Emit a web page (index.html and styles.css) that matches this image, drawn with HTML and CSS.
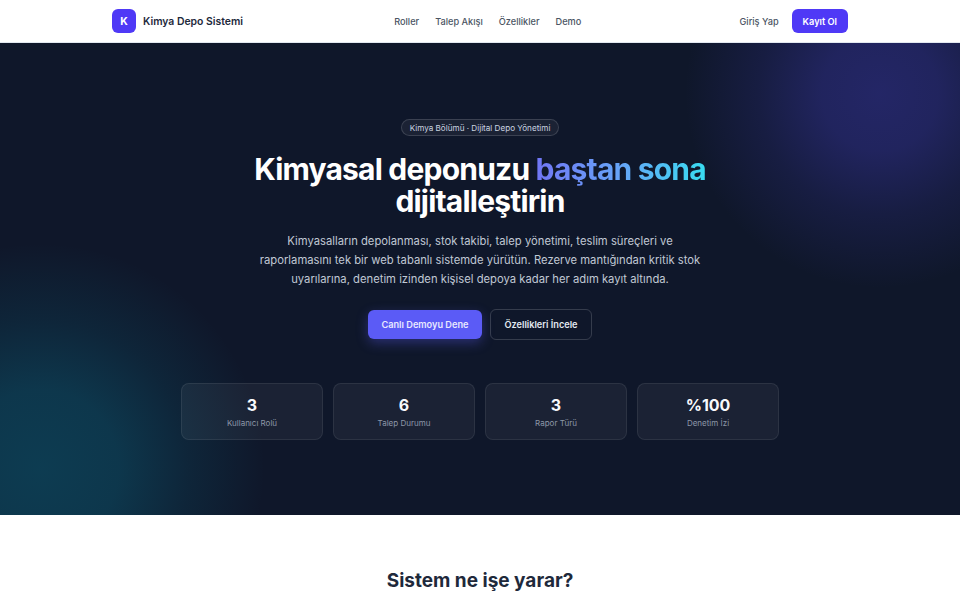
FILE: index.html
```html
<!DOCTYPE html>
<html lang="tr">
<head>
  <meta charset="UTF-8" />
  <meta name="viewport" content="width=device-width, initial-scale=1.0"/>
  <title>Kimya Depo Sistemi</title>
  <link rel="stylesheet" href="styles.css">
</head>
<body>
  <header class="navbar">
    <div class="navbar-inner">
      <a class="brand" href="#">
        <span class="brand-mark">K</span>
        <span class="brand-name">Kimya Depo Sistemi</span>
      </a>
      <nav class="nav-links">
        <a href="#">Roller</a>
        <a href="#">Talep Akışı</a>
        <a href="#">Özellikler</a>
        <a href="#">Demo</a>
      </nav>
      <div class="nav-actions">
        <a class="nav-login" href="#">Giriş Yap</a>
        <a class="nav-register" href="#">Kayıt Ol</a>
      </div>
    </div>
  </header>

  <section class="hero">
    <span class="hero-badge">Kimya Bölümü · Dijital Depo Yönetimi</span>
    <h1>Kimyasal deponuzu <span class="hero-accent">baştan sona</span> dijitalleştirin</h1>
    <p class="hero-text">Kimyasalların depolanması, stok takibi, talep yönetimi, teslim süreçleri ve raporlamasını tek bir web tabanlı sistemde yürütün. Rezerve mantığından kritik stok uyarılarına, denetim izinden kişisel depoya kadar her adım kayıt altında.</p>
    <div class="hero-buttons">
      <a class="btn btn-primary" href="#">Canlı Demoyu Dene</a>
      <a class="btn btn-outline" href="#">Özellikleri İncele</a>
    </div>
    <div class="stats">
      <div class="stat">
        <div class="stat-value">3</div>
        <div class="stat-label">Kullanıcı Rolü</div>
      </div>
      <div class="stat">
        <div class="stat-value">6</div>
        <div class="stat-label">Talep Durumu</div>
      </div>
      <div class="stat">
        <div class="stat-value">3</div>
        <div class="stat-label">Rapor Türü</div>
      </div>
      <div class="stat">
        <div class="stat-value">%100</div>
        <div class="stat-label">Denetim İzi</div>
      </div>
    </div>
  </section>

  <section class="about">
    <h2>Sistem ne işe yarar?</h2>
  </section>
</body>
</html>
```

FILE: styles.css
```css
* {
  box-sizing: border-box;
}
html, body {
  height: 600px;
  overflow: hidden;
}
body {
  margin: 0;
  font-family: Inter, "Noto Sans", sans-serif;
  background: #fff;
  color: #0f172a;
}
a {
  text-decoration: none;
  color: inherit;
}
.navbar {
  height: 43px;
  background: #fff;
  border-bottom: 1px solid #e2e8f0;
}
.navbar-inner {
  max-width: 736px;
  height: 42px;
  margin: 0 auto;
  display: flex;
  align-items: center;
  justify-content: space-between;
}
.brand {
  display: flex;
  align-items: center;
  gap: 7px;
}
.brand-mark {
  width: 24px;
  height: 24px;
  border-radius: 6px;
  background: #4f39f6;
  color: #fff;
  font-size: 10.5px;
  font-weight: 700;
  display: flex;
  align-items: center;
  justify-content: center;
}
.brand-name {
  font-size: 10.4px;
  font-weight: 600;
  color: #1e293b;
}
.nav-links {
  display: flex;
  gap: 16px;
  margin-right: 7px;
  font-size: 9.2px;
  font-weight: 500;
  color: #4b5563;
}
.nav-actions {
  display: flex;
  align-items: center;
  gap: 13px;
  font-size: 9.2px;
  font-weight: 500;
}
.nav-login {
  color: #4b5563;
}
.nav-register {
  background: #4f39f6;
  color: #fff;
  height: 24px;
  padding: 0 11px;
  border-radius: 6px;
  display: flex;
  align-items: center;
  font-weight: 600;
}
.hero {
  height: 472px;
  padding-top: 76px;
  background:
    radial-gradient(circle 195px at 880px 50px, rgba(79, 70, 229, 0.32), rgba(79, 70, 229, 0.28) 30%, rgba(79, 70, 229, 0.13) 62%, transparent),
    radial-gradient(circle 225px at 40px 425px, rgba(6, 182, 212, 0.23), rgba(6, 182, 212, 0.2) 35%, rgba(6, 182, 212, 0.09) 66%, transparent),
    #0f172a;
  display: flex;
  flex-direction: column;
  align-items: center;
  text-align: center;
}
.hero-badge {
  height: 17px;
  padding: 0 8px;
  border: 1px solid rgba(255, 255, 255, 0.14);
  border-radius: 9px;
  background: rgba(255, 255, 255, 0.05);
  color: #cbd5e1;
  font-size: 8.15px;
  font-weight: 400;
  display: flex;
  align-items: center;
}
.hero h1 {
  margin: 16.5px 0 0;
  max-width: 520px;
  font-size: 30px;
  line-height: 32px;
  font-weight: 700;
  letter-spacing: -0.8px;
  color: #fff;
}
.hero-accent {
  background: linear-gradient(90deg, #7176f5, #66a5f7 50%, #38dcf0);
  -webkit-background-clip: text;
  background-clip: text;
  color: transparent;
}
.hero-text {
  margin: 15.5px 0 0;
  max-width: 450px;
  font-size: 11.25px;
  line-height: 19px;
  color: #c0c8d4;
}
.hero-buttons {
  margin-top: 20px;
  display: flex;
  align-items: center;
  gap: 8px;
}
.btn {
  height: 31px;
  border-radius: 6px;
  font-size: 9.2px;
  font-weight: 600;
  display: flex;
  align-items: center;
}
.btn-primary {
  height: 29px;
  padding: 0 13.5px;
  background: #5b5bf6;
  color: #e8e8ff;
  box-shadow: 0 4px 12px rgba(91, 91, 246, 0.35);
}
.btn-outline {
  padding: 0 13.5px;
  border: 1px solid rgba(255, 255, 255, 0.16);
  color: #e2e8f0;
}
.stats {
  margin-top: 43px;
  display: grid;
  grid-template-columns: repeat(4, 142px);
  gap: 10px;
}
.stat {
  height: 57px;
  padding-top: 11px;
  border: 1px solid rgba(255, 255, 255, 0.08);
  border-radius: 8px;
  background: rgba(255, 255, 255, 0.05);
}
.stat-value {
  font-size: 16px;
  line-height: 20px;
  font-weight: 700;
  color: #f8fafc;
}
.stat-label {
  margin-top: 2px;
  font-size: 8px;
  line-height: 12px;
  color: #8d97a8;
}
.about {
  padding-top: 54px;
  text-align: center;
}
.about h2 {
  margin: 0;
  font-size: 19px;
  line-height: 24px;
  font-weight: 700;
  color: #1e293b;
}
```
